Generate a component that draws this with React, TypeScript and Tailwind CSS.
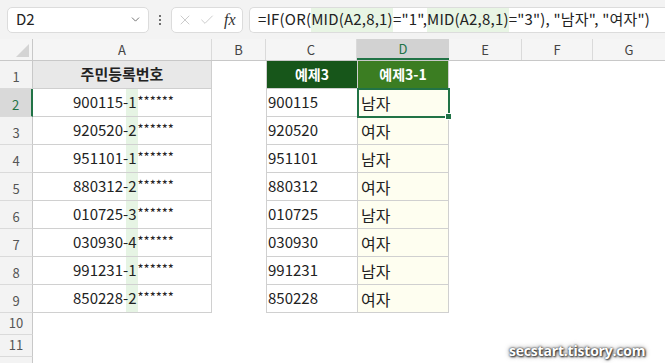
import React from 'react';
import { ChevronDown, X, Check } from 'lucide-react';

const ids = [
  ['900115-1******', '900115', '남자'],
  ['920520-2******', '920520', '여자'],
  ['951101-1******', '951101', '남자'],
  ['880312-2******', '880312', '여자'],
  ['010725-3******', '010725', '남자'],
  ['030930-4******', '030930', '여자'],
  ['991231-1******', '991231', '남자'],
  ['850228-2******', '850228', '여자'],
];

const font = { fontFamily: '"Noto Sans CJK KR", "Noto Sans", sans-serif' };

function RowHead({ n, active, h = 'h-[28px]' }: { n: number; active?: boolean; h?: string }) {
  return (
    <div
      className={`w-[33px] shrink-0 ${h} border-b border-[#dadada] flex items-end justify-center pb-[2px] text-[13px] ${
        active ? 'bg-[#d9d9d9] text-[#217346] border-r-2 border-r-[#217346]' : 'bg-[#f3f3f3] text-[#555] border-r border-r-[#c8c8c8]'
      }`}
    >
      {n}
    </div>
  );
}

export default function App() {
  return (
    <div className="w-[665px] h-[363px] bg-white overflow-hidden relative text-[#222]" style={font}>
      {/* formula bar */}
      <div className="h-[39px] bg-[#f3f3f3] flex items-center pl-[7px] gap-[6px]">
        <div className="w-[142px] h-[26px] bg-white border border-[#dcdcdc] rounded-[5px] flex items-center justify-between pl-[8px] pr-[6px] text-[15px]">
          <span>D2</span>
          <ChevronDown className="w-[13px] h-[13px] text-[#555]" strokeWidth={1.5} />
        </div>
        <div className="w-[10px] flex flex-col items-center gap-[2px]">
          <span className="w-[2px] h-[2px] bg-[#444] rounded-full" />
          <span className="w-[2px] h-[2px] bg-[#444] rounded-full" />
          <span className="w-[2px] h-[2px] bg-[#444] rounded-full" />
        </div>
        <div className="w-[72px] h-[26px] bg-white border border-[#dcdcdc] rounded-[5px] flex items-center pl-[5px] gap-[6px]">
          <X className="w-[16px] h-[16px] text-[#c4c4c4]" strokeWidth={1.3} />
          <Check className="w-[16px] h-[16px] text-[#c4c4c4]" strokeWidth={1.3} />
          <span className="italic text-[16px] text-[#333] ml-[3px]" style={{ fontFamily: '"Liberation Serif", serif' }}>
            fx
          </span>
        </div>
        <div className="flex-1 h-[26px] bg-white border border-[#dcdcdc] border-r-0 rounded-l-[5px] flex items-stretch pl-[8px] text-[15px] whitespace-nowrap tracking-[0.2px]">
          <span className="flex items-center">=IF(OR(</span>
          <span className="flex items-center bg-[#e8f5e4]">MID(A2,8,1)</span>
          <span className="flex items-center">="1",</span>
          <span className="flex items-center bg-[#e8f5e4]">MID(A2,8,1)</span>
          <span className="flex items-center">="3"), "남자", "여자")</span>
        </div>
      </div>

      {/* column headers */}
      <div className="flex h-[22px] bg-[#f5f5f5] border-b border-[#c8c8c8] text-[13px] text-[#444]">
        <div className="w-[33px] shrink-0 border-r border-[#c8c8c8] flex items-end justify-end p-[3px]">
          <div className="w-0 h-0 border-l-[13px] border-l-transparent border-b-[13px] border-b-[#d4d4d4]" />
        </div>
        <div className="w-[179px] shrink-0 border-r border-[#dadada] flex items-center justify-center">A</div>
        <div className="w-[54px] shrink-0 border-r border-[#dadada] flex items-center justify-center">B</div>
        <div className="w-[91px] shrink-0 border-r border-[#dadada] flex items-center justify-center">C</div>
        <div className="w-[92px] shrink-0 bg-[#d2d2d2] text-[#217346] border-b-2 border-[#217346] flex items-center justify-center">D</div>
        <div className="w-[73px] shrink-0 border-r border-[#dadada] flex items-center justify-center">E</div>
        <div className="w-[71px] shrink-0 border-r border-[#dadada] flex items-center justify-center">F</div>
        <div className="w-[72px] shrink-0 flex items-center justify-center">G</div>
      </div>

      {/* row 1 */}
      <div className="flex">
        <RowHead n={1} />
        <div className="w-[179px] h-[28px] shrink-0 bg-[#e8e8e8] border-r border-b border-[#cfcfcf] flex items-center justify-center font-bold text-[15px]">
          주민등록번호
        </div>
        <div className="w-[54px] shrink-0" />
        <div className="w-[91px] h-[28px] shrink-0 bg-[#17561a] text-white border-l border-b border-[#cfcfcf] flex items-center justify-center font-bold text-[14px]">
          예제3
        </div>
        <div className="w-[92px] h-[28px] shrink-0 bg-[#3b7d22] text-white border-l border-r border-b border-[#cfcfcf] flex items-center justify-center font-bold text-[14px]">
          예제3-1
        </div>
      </div>

      {ids.map(([a, c, d], i) => (
        <div className="flex" key={i}>
          <RowHead n={i + 2} active={i === 0} />
          <div className="w-[179px] h-[28px] shrink-0 border-r border-b border-[#d0d0d0] flex items-stretch pl-[40px] text-[15px]">
            <span className="flex items-center relative">{a.slice(0, 7)}</span>
            <span className="flex items-center bg-[#e6f4e4] px-[2px] -mx-[2px]">{a.slice(7, 8)}</span>
            <span className="flex items-center relative text-[13px] pb-[3px] pl-[1px]">{a.slice(8)}</span>
          </div>
          <div className="w-[54px] shrink-0" />
          <div className="w-[91px] h-[28px] shrink-0 border-l border-b border-[#d0d0d0] flex items-center pl-[1px] text-[15px]">
            {c}
          </div>
          <div className="w-[92px] h-[28px] shrink-0 bg-[#fefef0] border-l border-r border-b border-[#d0d0d0] flex items-center pl-[3px] text-[16px] relative">
            {d}
            {i === 0 && (
              <>
                <div className="absolute -left-[1px] -top-[1px] w-[93px] h-[30px] border-2 border-[#217346] z-10" />
                <div className="absolute -right-[4px] -bottom-[4px] w-[7px] h-[7px] bg-[#217346] border border-white z-20" />
              </>
            )}
          </div>
        </div>
      ))}

      <div className="flex">
        <RowHead n={10} h="h-[22px]" />
      </div>
      <div className="flex">
        <RowHead n={11} h="h-[22px]" />
      </div>
      <div className="flex">
        <div className="w-[33px] h-[20px] bg-[#f3f3f3] border-r border-[#c8c8c8]" />
      </div>

      {/* watermark */}
      <div
        className="absolute left-[509px] top-[340px] text-[14px] font-bold text-white tracking-[-0.2px]"
        style={{
          fontFamily: '"Open Sans", sans-serif',
          textShadow: '0 0 2px #222, 1px 1px 2px #333, 0 0 5px #666',
        }}
      >
        secstart.tistory.com
      </div>
    </div>
  );
}
